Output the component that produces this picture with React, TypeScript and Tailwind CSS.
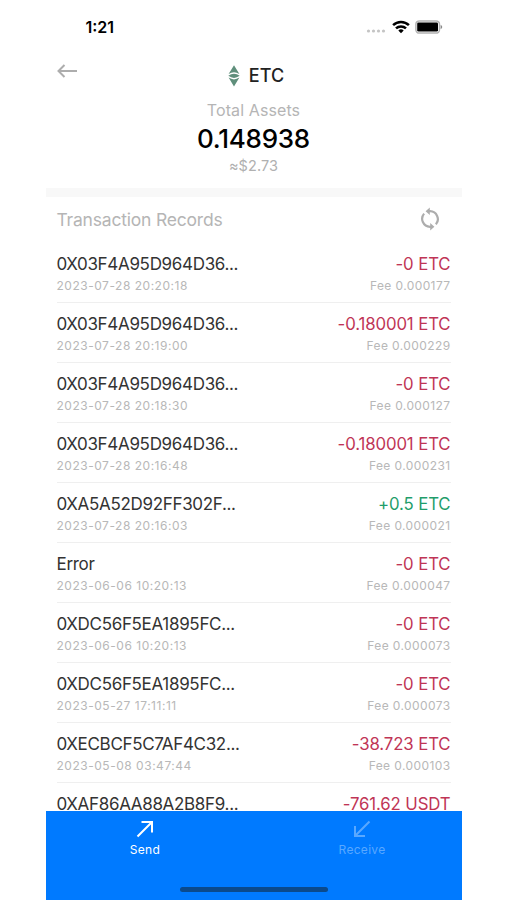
import React from 'react';

interface Transaction {
  title: string;
  time: string;
  amount: string;
  fee?: string;
}

const transactions: Transaction[] = [
  { title: '0X03F4A95D964D36...', time: '2023-07-28 20:20:18', amount: '-0 ETC', fee: '0.000177' },
  { title: '0X03F4A95D964D36...', time: '2023-07-28 20:19:00', amount: '-0.180001 ETC', fee: '0.000229' },
  { title: '0X03F4A95D964D36...', time: '2023-07-28 20:18:30', amount: '-0 ETC', fee: '0.000127' },
  { title: '0X03F4A95D964D36...', time: '2023-07-28 20:16:48', amount: '-0.180001 ETC', fee: '0.000231' },
  { title: '0XA5A52D92FF302F...', time: '2023-07-28 20:16:03', amount: '+0.5 ETC', fee: '0.000021' },
  { title: 'Error', time: '2023-06-06 10:20:13', amount: '-0 ETC', fee: '0.000047' },
  { title: '0XDC56F5EA1895FC...', time: '2023-06-06 10:20:13', amount: '-0 ETC', fee: '0.000073' },
  { title: '0XDC56F5EA1895FC...', time: '2023-05-27 17:11:11', amount: '-0 ETC', fee: '0.000073' },
  { title: '0XECBCF5C7AF4C32...', time: '2023-05-08 03:47:44', amount: '-38.723 ETC', fee: '0.000103' },
  { title: '0XAF86AA88A2B8F9...', time: '', amount: '-761.62 USDT' },
];

const StatusBar = () => (
  <div className="flex h-[54px] shrink-0 items-center justify-between pl-[40px] pr-[19px]">
    <span className="text-[16px] font-semibold leading-none text-black">1:21</span>
    <div className="flex items-center">
      <svg width="20" height="4" viewBox="0 0 20 4" className="mt-[8px]" fill="#c4c4c4">
        <circle cx="2.5" cy="2" r="1.6" />
        <circle cx="7.5" cy="2" r="1.6" />
        <circle cx="12.5" cy="2" r="1.6" />
        <circle cx="17.5" cy="2" r="1.6" />
      </svg>
      <svg width="18" height="14" viewBox="0 0 18 14" className="ml-[6px]" fill="none" stroke="#000" strokeWidth="2.5">
        <path d="M1.1 5.1a11.3 11.3 0 0 1 15.8 0" />
        <path d="M4 8.4a7.2 7.2 0 0 1 10 0" />
        <path d="M9 13.3 6.3 10.6a3.9 3.9 0 0 1 5.4 0z" fill="#000" stroke="none" />
      </svg>
      <svg width="28" height="14" viewBox="0 0 28 14" className="ml-[5px]">
        <rect x="0.9" y="0.9" width="23.6" height="12.2" rx="3.4" fill="#fff" stroke="#b3b3b3" strokeWidth="1.5" />
        <rect x="2.2" y="2.4" width="20.8" height="9.2" rx="1.4" fill="#000" />
        <path d="M25.6 5v4c1-.3 1.6-1.1 1.6-2s-.6-1.7-1.6-2z" fill="#8a8a8a" />
      </svg>
    </div>
  </div>
);

const EtcLogo = () => (
  <svg width="12" height="22" viewBox="0 0 12 22" fill="#5f8f7b">
    <path d="M6 0.3 0.6 9Q6 5.6 11.4 9z" />
    <path d="M0.3 10.8Q6 6.6 11.7 10.8Q6 15 0.3 10.8z" />
    <path d="M0.6 12.6 6 21.5 11.4 12.6Q6 16.2 0.6 12.6z" />
  </svg>
);

const TransactionRow = ({ tx }: { tx: Transaction }) => (
  <div className="flex h-[60px] shrink-0 justify-between border-b border-[#efefef] pt-[10px]">
    <div>
      <div className="text-[17px] leading-[23px] tracking-[-0.32px] text-[#333]">{tx.title}</div>
      <div className="text-[12px] leading-[20px] tracking-[0.52px] text-[#b8b8b8]">{tx.time}</div>
    </div>
    <div className="text-right">
      <div
        className={`text-[16.8px] leading-[23px] tracking-[-0.12px] ${tx.amount.startsWith('+') ? 'text-[#1f9d6b]' : 'text-[#bf3556]'}`}
      >
        {tx.amount}
      </div>
      {tx.fee && <div className="text-[12px] leading-[20px] tracking-[0.4px] text-[#b8b8b8]">Fee {tx.fee}</div>}
    </div>
  </div>
);

const App: React.FC = () => {
  return (
    <div className="h-[900px] w-[507px] overflow-hidden bg-white pl-[45.5px] font-['Inter',sans-serif]">
      <div className="flex h-full w-[416px] flex-col">
        <StatusBar />

        {/* Header */}
        <div className="grid h-[43px] shrink-0 grid-cols-3 items-center px-[11px]">
          <button className="-mt-[9px]">
            <svg width="21" height="14" viewBox="0 0 21 14" fill="none" stroke="#adadad" strokeWidth="2">
              <path d="M20 7H1.5M7.5 1 1.5 7l6 6" />
            </svg>
          </button>
          <div className="flex items-center justify-center gap-[9px] pl-[5px]">
            <EtcLogo />
            <span className="text-[18px] font-medium leading-none text-[#222]">ETC</span>
          </div>
        </div>
        <div className="flex h-[91px] shrink-0 flex-col items-center">
          <div className="text-[16px] leading-[26px] tracking-[0.1px] text-[#b5b5b5]">Total Assets</div>
          <div className="text-[26px] font-medium leading-[32px] tracking-[-0.25px] text-black">0.148938</div>
          <div className="text-[14.5px] leading-[22px] tracking-[0.1px] text-[#b0b0b0]">≈$2.73</div>
        </div>
        <div className="h-[9px] shrink-0 bg-[#f8f8f8]" />

        {/* Records */}
        <div className="flex h-[46px] shrink-0 items-center justify-between pl-[11px] pr-[22px]">
          <span className="mt-px text-[17.5px] tracking-[-0.2px] text-[#b5b5b5]">Transaction Records</span>
          <svg width="20" height="24" viewBox="0 0 20 24" className="-mt-[2px]" fill="none" stroke="#adadad" strokeWidth="2.2">
            <path d="M8.5 4.2H10a8 8 0 0 1 5.9 13.2" />
            <path d="M11.5 19.8H10A8 8 0 0 1 4.1 6.6" />
            <path d="M9.8.5v7.4L5.600 4.200zM10.2 16.1v7.4l4.200-3.700z" fill="#adadad" stroke="none" />
          </svg>
        </div>
        <div className="flex min-h-0 flex-1 flex-col overflow-hidden px-[11px]">
          {transactions.map((tx, i) => (
            <TransactionRow key={i} tx={tx} />
          ))}
        </div>

        {/* Bottom actions */}
        <div className="flex h-[89.5px] shrink-0 flex-col items-center bg-[#007aff] pt-[9px]">
          <div className="flex w-full flex-1">
            <button className="flex w-[199px] flex-col items-center text-white">
              <svg width="18" height="18" viewBox="0 0 18 18" fill="none" stroke="currentColor" strokeWidth="2">
                <path d="M1.5 16.5 16 2M5.5 2H16v10.5" />
              </svg>
              <span className="mt-[3px] text-[12px] leading-[18px] tracking-[0.4px]">Send</span>
            </button>
            <button className="ml-[18px] flex w-[199px] flex-col items-center text-[#59a8ff]">
              <svg width="18" height="18" viewBox="0 0 18 18" fill="none" stroke="currentColor" strokeWidth="2">
                <path d="M16.5 1.5 2 16M2 6v10h10" />
              </svg>
              <span className="mt-[3px] text-[12px] leading-[18px] tracking-[0.3px]">Receive</span>
            </button>
          </div>
          <div className="mb-[8.5px] h-[5px] w-[148px] rounded-full bg-[#0b4a8c]" />
        </div>
      </div>
    </div>
  );
};

export default App;
